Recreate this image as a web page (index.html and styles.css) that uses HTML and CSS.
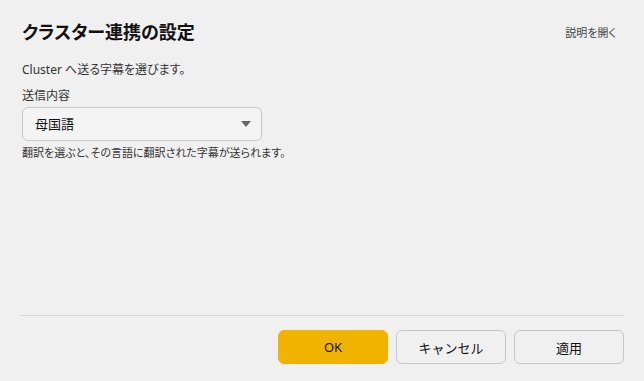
FILE: index.html
```html
<!DOCTYPE html>
<html lang="ja">
<head>
    <meta charset="UTF-8">
    <meta name="viewport" content="width=device-width, initial-scale=1.0">
    <title>クラスター連携の設定</title>
    <link rel="stylesheet" href="styles.css">
</head>
<body>
    <div class="dialog">
        <div class="header">
            <h1>クラスター連携の設定</h1>
            <a class="help-link" href="#">説明を開く</a>
        </div>

        <p class="desc">Cluster へ送る字幕を選びます。</p>

        <div class="field">
            <label for="sendContent">送信内容</label>
            <div class="select-wrap">
                <select id="sendContent">
                    <option value="native" selected>母国語</option>
                    <option value="translation">翻訳</option>
                </select>
                <span class="arrow"></span>
            </div>
            <p class="hint">翻訳を選ぶと、その言語に翻訳された字幕が送られます。</p>
        </div>

        <div class="spacer"></div>

        <div class="footer">
            <button class="btn primary">OK</button>
            <button class="btn">キャンセル</button>
            <button class="btn">適用</button>
        </div>
    </div>
</body>
</html>
```

FILE: styles.css
```css
body {
    margin: 0;
    background-color: #f0f0f0;
    color: #1a1a1a;
    font-family: 'Noto Sans', 'Noto Sans CJK JP', sans-serif;
    font-feature-settings: "palt";
}
.dialog {
    height: 381px;
    box-sizing: border-box;
    display: flex;
    flex-direction: column;
    padding: 18px 20px 17px 20px;
}
.header {
    display: flex;
    justify-content: space-between;
    align-items: center;
    padding: 0 6px 0 2px;
}
h1 {
    margin: 0;
    font-size: 18px;
    line-height: 28px;
    font-weight: 700;
    color: #111;
}
.help-link {
    font-size: 11px;
    color: #444;
    text-decoration: none;
    margin-right: 2px;
}
.desc {
    margin: 15px 0 0 2px;
    font-size: 12px;
    line-height: 18px;
    color: #333;
}
.field {
    margin: 8px 0 0 2px;
}
.field label {
    display: block;
    font-size: 12px;
    line-height: 18px;
    color: #333;
}
.select-wrap {
    position: relative;
    width: 240px;
    margin-top: 2px;
}
select {
    width: 100%;
    height: 34px;
    padding: 0 12px;
    border: 1px solid #c8c8c8;
    border-radius: 6px;
    background-color: #f4f4f4;
    font-family: inherit;
    font-size: 13px;
    color: #111;
    appearance: none;
    outline: none;
}
.arrow {
    position: absolute;
    right: 11px;
    top: 14px;
    width: 0;
    height: 0;
    border-left: 5.5px solid transparent;
    border-right: 5.5px solid transparent;
    border-top: 6px solid #666;
    pointer-events: none;
}
.hint {
    margin: 3px 0 0;
    font-size: 11px;
    line-height: 18px;
    color: #333;
}
.spacer {
    flex: 1;
}
.footer {
    display: flex;
    justify-content: flex-end;
    gap: 8px;
    border-top: 1px solid #d6d6d6;
    padding-top: 14px;
}
.btn {
    width: 110px;
    height: 34px;
    border: 1px solid #c6c6c6;
    border-radius: 6px;
    background-color: #f0f0f0;
    font-family: inherit;
    font-size: 13px;
    color: #111;
    cursor: pointer;
}
.btn.primary {
    background-color: #f0b400;
    border-color: #f0b400;
}
```
